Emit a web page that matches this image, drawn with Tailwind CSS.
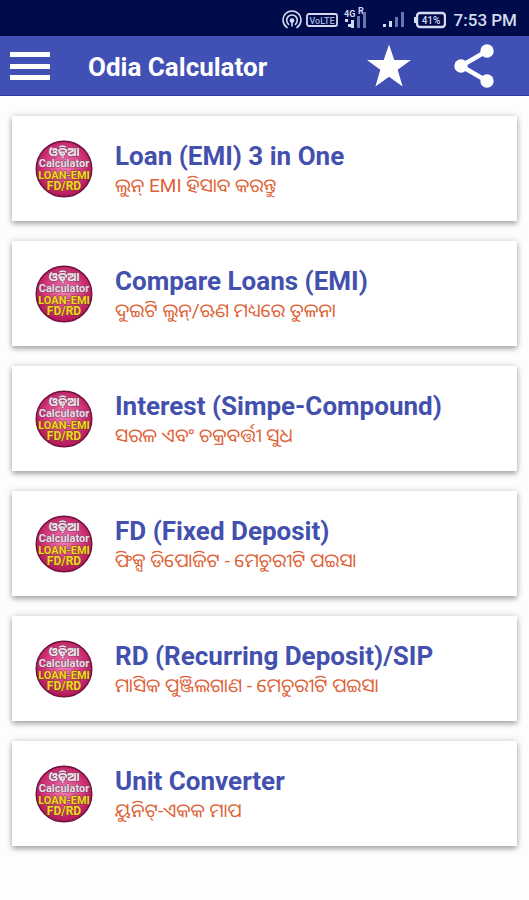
<!DOCTYPE html>
<html lang="or">
<head>
<meta charset="utf-8">
<meta name="viewport" content="width=device-width, initial-scale=1">
<title>Odia Calculator</title>
<script src="https://cdn.jsdelivr.net/npm/@tailwindcss/browser@4"></script>
</head>
<body class="min-h-screen bg-[#fdfdfd] font-[Roboto,'Noto_Sans_Oriya','Noto_Sans',sans-serif]">
<svg class="absolute h-0 w-0" aria-hidden="true">
  <defs>
    <radialGradient id="disc" cx="50%" cy="45%" r="55%">
      <stop offset="0" stop-color="#f27cb4"/>
      <stop offset="0.55" stop-color="#d93d83"/>
      <stop offset="1" stop-color="#b01556"/>
    </radialGradient>
    <symbol id="logo" viewBox="0 0 58 58">
      <circle cx="29" cy="29" r="27.8" fill="url(#disc)" stroke="#70113f" stroke-width="1.4"/>
      <g text-anchor="middle" font-weight="700" stroke-linejoin="round" paint-order="stroke">
        <text x="29" y="16" font-size="12" fill="#f5e6ee" stroke="#754760" stroke-width="1">ଓଡ଼ିଆ</text>
        <text x="29" y="27" font-size="11" fill="#f0dce6" stroke="#754760" stroke-width="1">Calculator</text>
        <text x="29" y="39" font-size="11" fill="#f0d92c" stroke="#7c4012" stroke-width="1">LOAN-EMI</text>
        <text x="29" y="50" font-size="12" fill="#f0d92c" stroke="#7c4012" stroke-width="1">FD/RD</text>
      </g>
    </symbol>
  </defs>
</svg>

<div class="flex h-9 items-center justify-end bg-[#000b4c] pt-1 pr-3 text-[#d5daee]">
  <svg class="mr-1 h-5 w-5" viewBox="0 0 20 20" fill="none" stroke="currentColor" stroke-width="1.6" stroke-linecap="round" aria-hidden="true">
    <path d="M5 17.5A9 9 0 1 1 15 17.5"/><path d="M6.6 14.3A5.3 5.3 0 1 1 13.4 14.3"/><circle cx="10" cy="10.6" r="1.6" fill="currentColor"/><path d="M10 12v4"/>
  </svg>
  <svg class="mr-1 h-4 w-8" viewBox="0 0 32 16" aria-hidden="true">
    <rect x="1" y="2" width="30" height="12" rx="2" fill="none" stroke="currentColor" stroke-width="1.8"/>
    <text x="16" y="11.5" text-anchor="middle" font-size="9" font-weight="500" fill="#a6b1dc">VoLTE</text>
  </svg>
  <svg class="mr-3 mb-1 h-6 w-7" viewBox="0 0 28 24" fill="currentColor" aria-hidden="true">
    <text x="2" y="11" font-size="9" font-weight="700">4G</text>
    <text x="16" y="8" font-size="9" font-weight="700">R</text>
    <rect x="3" y="13" width="3" height="3"/><rect x="6" y="18" width="3" height="3"/>
    <rect x="9" y="14" width="3" height="8"/>
    <g fill="#6975ac"><rect x="15" y="10" width="3" height="12"/><rect x="21" y="6" width="3" height="16"/></g>
  </svg>
  <svg class="mr-2 h-5 w-6" viewBox="0 0 24 20" fill="currentColor" aria-hidden="true">
    <rect x="1" y="14" width="3" height="3"/><rect x="7" y="11" width="3" height="6"/>
    <g fill="#6975ac"><rect x="13" y="7" width="3" height="10"/><rect x="19" y="2" width="3" height="15"/></g>
  </svg>
  <svg class="mr-2 h-5 w-8" viewBox="0 0 32 20" aria-hidden="true">
    <rect x="3" y="3" width="28" height="14" rx="3" fill="none" stroke="currentColor" stroke-width="2.4"/>
    <rect x="0" y="7" width="2" height="6" fill="currentColor"/>
    <text x="17" y="13.5" text-anchor="middle" font-size="10" font-weight="500" fill="currentColor">41%</text>
  </svg>
  <span class="text-[17px] leading-5 font-medium">7:53 PM</span>
</div>

<header class="flex h-15 items-center border-b border-[#323f9a] bg-[#4150b5] pr-8 pl-2 text-white">
  <button type="button" aria-label="Menu" class="h-11 w-11">
    <svg class="h-11 w-11" viewBox="0 0 44 44" fill="currentColor" aria-hidden="true"><path d="M2 8h40v5H2zM2 20h40v5H2zM2 31h40v5H2z"/></svg>
  </button>
  <h1 class="ml-9 flex-1 pt-0.5 text-[26px] leading-8 font-bold">Odia Calculator</h1>
  <button type="button" aria-label="Rate" class="mr-[42px] h-11 w-11">
    <svg class="h-11 w-11" viewBox="0 0 44 44" fill="currentColor" aria-hidden="true"><path d="M22 0.500l5.300 15.500H44L30.700 25.700 35.600 42.500 22 32.800 8.400 42.500 13.300 25.700 0 16H16.700z"/></svg>
  </button>
  <button type="button" aria-label="Share" class="h-11 w-11">
    <svg class="h-11 w-11" viewBox="0 0 44 44" fill="currentColor" aria-hidden="true"><path d="M34 7L8 22L34 37" fill="none" stroke="currentColor" stroke-width="4.500"/><circle cx="34" cy="7" r="6.700"/><circle cx="8" cy="22" r="6.700"/><circle cx="34" cy="37" r="6.700"/></svg>
  </button>
</header>

<main class="flex flex-col gap-5 px-3 pt-5 pb-8">
  <a href="#loan" class="flex h-[105px] items-center bg-white pl-[23px] shadow-[0_3px_5px_rgba(0,0,0,0.28),0_0_7px_rgba(0,0,0,0.16)]">
    <svg class="mr-[22px] h-[58px] w-[58px] shrink-0" aria-hidden="true"><use href="#logo"/></svg>
    <div class="pt-0.5"><h2 class="text-[26px] leading-8 font-bold text-[#4350ae]">Loan (EMI) 3 in One</h2><p class="text-[19px] leading-7 text-[#dd6236]">ଲୁନ୍ EMI ହିସାବ କରନ୍ତୁ</p></div>
  </a>
  <a href="#compare" class="flex h-[105px] items-center bg-white pl-[23px] shadow-[0_3px_5px_rgba(0,0,0,0.28),0_0_7px_rgba(0,0,0,0.16)]">
    <svg class="mr-[22px] h-[58px] w-[58px] shrink-0" aria-hidden="true"><use href="#logo"/></svg>
    <div class="pt-0.5"><h2 class="text-[26px] leading-8 font-bold text-[#4350ae]">Compare Loans (EMI)</h2><p class="text-[19px] leading-7 text-[#dd6236]">ଦୁଇଟି ଲୁନ୍/ଋଣ ମଧ୍ୟରେ ତୁଳନା</p></div>
  </a>
  <a href="#interest" class="flex h-[105px] items-center bg-white pl-[23px] shadow-[0_3px_5px_rgba(0,0,0,0.28),0_0_7px_rgba(0,0,0,0.16)]">
    <svg class="mr-[22px] h-[58px] w-[58px] shrink-0" aria-hidden="true"><use href="#logo"/></svg>
    <div class="pt-0.5"><h2 class="text-[26px] leading-8 font-bold text-[#4350ae]">Interest (Simpe-Compound)</h2><p class="text-[19px] leading-7 text-[#dd6236]">ସରଳ ଏବଂ ଚକ୍ରବର୍ତ୍ତୀ ସୁଧ</p></div>
  </a>
  <a href="#fd" class="flex h-[105px] items-center bg-white pl-[23px] shadow-[0_3px_5px_rgba(0,0,0,0.28),0_0_7px_rgba(0,0,0,0.16)]">
    <svg class="mr-[22px] h-[58px] w-[58px] shrink-0" aria-hidden="true"><use href="#logo"/></svg>
    <div class="pt-0.5"><h2 class="text-[26px] leading-8 font-bold text-[#4350ae]">FD (Fixed Deposit)</h2><p class="text-[19px] leading-7 text-[#dd6236]">ଫିକ୍ସ ଡିପୋଜିଟ - ମେଚୁରୀଟି ପଇସା</p></div>
  </a>
  <a href="#rd" class="flex h-[105px] items-center bg-white pl-[23px] shadow-[0_3px_5px_rgba(0,0,0,0.28),0_0_7px_rgba(0,0,0,0.16)]">
    <svg class="mr-[22px] h-[58px] w-[58px] shrink-0" aria-hidden="true"><use href="#logo"/></svg>
    <div class="pt-0.5"><h2 class="text-[26px] leading-8 font-bold text-[#4350ae]">RD (Recurring Deposit)/SIP</h2><p class="text-[19px] leading-7 text-[#dd6236]">ମାସିକ ପୁଞ୍ଜିଲଗାଣ - ମେଚୁରୀଟି ପଇସା</p></div>
  </a>
  <a href="#unit" class="flex h-[105px] items-center bg-white pl-[23px] shadow-[0_3px_5px_rgba(0,0,0,0.28),0_0_7px_rgba(0,0,0,0.16)]">
    <svg class="mr-[22px] h-[58px] w-[58px] shrink-0" aria-hidden="true"><use href="#logo"/></svg>
    <div class="pt-0.5"><h2 class="text-[26px] leading-8 font-bold text-[#4350ae]">Unit Converter</h2><p class="text-[19px] leading-7 text-[#dd6236]">ୟୁନିଟ୍-ଏକକ ମାପ</p></div>
  </a>
</main>
</body>
</html>
